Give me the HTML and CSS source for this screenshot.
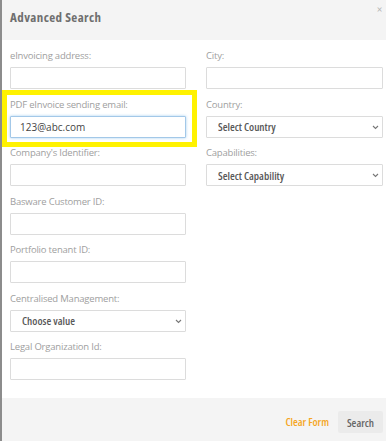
FILE: index.html
```html
<!DOCTYPE html>
<html lang="en">
<head>
    <meta charset="UTF-8">
    <title>Advanced Search</title>
    <link rel="stylesheet" href="styles.css">
</head>
<body>
    <div class="modal">
        <div class="modal-header">
            <h2 class="modal-title">Advanced Search</h2>
            <span class="close">&times;</span>
        </div>

        <div class="modal-body">
            <div class="column column-left">
                <div class="form-group">
                    <label>eInvoicing address:</label>
                    <input type="text" class="form-control">
                </div>
                <div class="form-group">
                    <label>PDF eInvoice sending email:</label>
                    <input type="text" class="form-control focused" value="123@abc.com">
                </div>
                <div class="form-group">
                    <label>Company's Identifier:</label>
                    <input type="text" class="form-control">
                </div>
                <div class="form-group">
                    <label>Basware Customer ID:</label>
                    <input type="text" class="form-control">
                </div>
                <div class="form-group">
                    <label>Portfolio tenant ID:</label>
                    <input type="text" class="form-control">
                </div>
                <div class="form-group">
                    <label>Centralised Management:</label>
                    <div class="select-wrap">
                        <select class="form-select">
                            <option>Choose value</option>
                        </select>
                        <svg class="chevron" width="7" height="5" viewBox="0 0 7 5"><path d="M1 1l2.5 2.5L6 1" fill="none" stroke="#777" stroke-width="1.1"/></svg>
                    </div>
                </div>
                <div class="form-group">
                    <label>Legal Organization Id:</label>
                    <input type="text" class="form-control">
                </div>
            </div>

            <div class="column column-right">
                <div class="form-group">
                    <label>City:</label>
                    <input type="text" class="form-control">
                </div>
                <div class="form-group">
                    <label>Country:</label>
                    <div class="select-wrap">
                        <select class="form-select">
                            <option>Select Country</option>
                        </select>
                        <svg class="chevron" width="7" height="5" viewBox="0 0 7 5"><path d="M1 1l2.5 2.5L6 1" fill="none" stroke="#777" stroke-width="1.1"/></svg>
                    </div>
                </div>
                <div class="form-group">
                    <label>Capabilities:</label>
                    <div class="select-wrap">
                        <select class="form-select">
                            <option>Select Capability</option>
                        </select>
                        <svg class="chevron" width="7" height="5" viewBox="0 0 7 5"><path d="M1 1l2.5 2.5L6 1" fill="none" stroke="#777" stroke-width="1.1"/></svg>
                    </div>
                </div>
            </div>
        </div>

        <div class="modal-footer">
            <a class="clear-link">Clear Form</a>
            <button class="btn-search">Search</button>
        </div>

        <!-- annotation box around the email field -->
        <div class="highlight"></div>
    </div>
</body>
</html>
```

FILE: styles.css
```css
body {
    margin: 0;
    font-family: 'Open Sans', Roboto, sans-serif;
    font-stretch: 87.5%;
    background-color: #FFFFFF;
}

.modal {
    position: relative;
    width: 386px;
    height: 441px;
    box-sizing: border-box;
    border-left: 2px solid #8C8C8C;
    display: flex;
    flex-direction: column;
    background-color: #FFFFFF;
}

.modal-header {
    height: 40px;
    box-sizing: border-box;
    background-color: #F4F4F4;
    display: flex;
    justify-content: space-between;
    align-items: flex-start;
    padding: 9px 4px 0 8px;
}

.modal-title {
    margin: 0;
    font-size: 13px;
    line-height: 16px;
    font-weight: 700;
    letter-spacing: 0.4px;
    color: #6F6F6F;
}

.close {
    font-size: 12px;
    line-height: 10px;
    margin-top: -4px;
    color: #B5B5B5;
}

.modal-body {
    flex: 1;
    display: flex;
    gap: 20px;
    padding: 9px 3px 0 8px;
}

.column {
    display: flex;
    flex-direction: column;
    gap: 8.5px;
}

.column-left {
    width: 176px;
}

.column-right {
    width: 177px;
}

.form-group label {
    display: block;
    font-size: 9.5px;
    line-height: 14px;
    font-stretch: 100%;
    letter-spacing: -0.2px;
    margin-bottom: 4px;
    color: #A0A0A0;
}

.form-control {
    display: block;
    width: 100%;
    height: 22px;
    box-sizing: border-box;
    border: 1px solid #DCDCDC;
    border-radius: 1px;
    padding: 0 9px;
    font-family: inherit;
    font-stretch: 100%;
    font-size: 10px;
    font-weight: 500;
    color: #444444;
    outline: none;
}

.form-control.focused {
    border-color: #A3C8E8;
    box-shadow: 0 0 3px rgba(102, 175, 233, 0.6);
}

.select-wrap {
    position: relative;
}

.form-select {
    display: block;
    width: 100%;
    height: 22px;
    box-sizing: border-box;
    appearance: none;
    -webkit-appearance: none;
    border: 1px solid #DCDCDC;
    border-radius: 1px;
    background-color: #FFFFFF;
    padding: 0 11px;
    font-family: inherit;
    font-stretch: 87.5%;
    font-size: 11px;
    font-weight: 600;
    color: #585858;
    outline: none;
}

.chevron {
    position: absolute;
    right: 4px;
    top: 9px;
}

.modal-footer {
    height: 43px;
    box-sizing: border-box;
    background-color: #F4F4F4;
    display: flex;
    justify-content: flex-end;
    align-items: flex-start;
    gap: 9px;
    padding: 13px 3px 0 0;
}

.clear-link {
    font-size: 11px;
    line-height: 22px;
    font-weight: 600;
    color: #F5A623;
    cursor: pointer;
}

.btn-search {
    height: 22px;
    width: 45px;
    border: none;
    border-radius: 2px;
    background-color: #EBEBEB;
    font-family: inherit;
    font-stretch: 87.5%;
    font-size: 11px;
    font-weight: 600;
    color: #666666;
    padding: 0;
    cursor: pointer;
}

/* Annotation */
.highlight {
    position: absolute;
    left: 0;
    top: 90px;
    width: 195px;
    height: 57px;
    box-sizing: border-box;
    border: 5px solid #FFF200;
    pointer-events: none;
}
```
